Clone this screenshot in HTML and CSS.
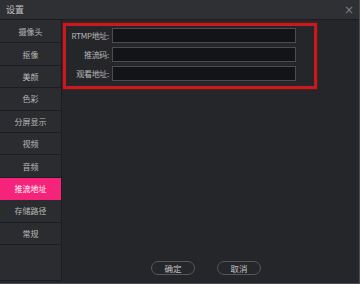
FILE: index.html
```html
<!DOCTYPE html>
<html lang="zh-CN">
<head>
    <meta charset="UTF-8">
    <title>设置</title>
    <link rel="stylesheet" href="styles.css">
</head>
<body>
    <div class="window">
        <div class="titlebar">
            <span class="title">设置</span>
            <span class="close">&times;</span>
        </div>

        <div class="main">
            <ul class="sidebar">
                <li>摄像头</li>
                <li>抠像</li>
                <li>美颜</li>
                <li>色彩</li>
                <li>分屏显示</li>
                <li>视频</li>
                <li>音频</li>
                <li class="active">推流地址</li>
                <li>存储路径</li>
                <li>常规</li>
            </ul>

            <div class="content">
                <div class="stream-box">
                    <div class="form-row">
                        <label for="rtmp">RTMP地址:</label>
                        <input type="text" id="rtmp">
                    </div>
                    <div class="form-row">
                        <label for="key">推流码:</label>
                        <input type="text" id="key">
                    </div>
                    <div class="form-row">
                        <label for="watch">观看地址:</label>
                        <input type="text" id="watch">
                    </div>
                </div>

                <div class="footer">
                    <button>确定</button>
                    <button>取消</button>
                </div>
            </div>
        </div>
    </div>
</body>
</html>
```

FILE: styles.css
```css
:root {
    --window-bg: #25262a;
    --sidebar-bg: #2b2c30;
    --line-color: #1c1d20;
    --text-color: #b8b8b8;
    --accent-color: #f6237a;
    --mark-color: #c8191d;
}

* {
    margin: 0;
    padding: 0;
    box-sizing: border-box;
}

body {
    font-family: "Noto Sans CJK SC", "Liberation Sans", sans-serif;
    background: var(--window-bg);
    color: var(--text-color);
}

.window {
    width: 360px;
    height: 284px;
    display: flex;
    flex-direction: column;
    background: var(--window-bg);
    border-right: 1px solid #4a4c51;
    border-bottom: 1px solid #4a4c51;
}

.titlebar {
    height: 20px;
    display: flex;
    align-items: center;
    justify-content: space-between;
    padding: 0 5px 0 6px;
    background: #2f3034;
    border-bottom: 1px solid var(--line-color);
}

.title {
    font-size: 9px;
    color: #c0c0c0;
}

.close {
    font-family: "DejaVu Sans", sans-serif;
    font-size: 12px;
    color: #7c7e83;
    line-height: 1;
}

.main {
    flex: 1;
    display: flex;
    padding-bottom: 2px;
}

.sidebar {
    list-style: none;
    width: 62px;
    padding-top: 1px;
    background: var(--sidebar-bg);
    border-right: 1px solid var(--line-color);
    border-bottom: 1px solid var(--line-color);
}

.sidebar li {
    height: 22.4px;
    display: flex;
    align-items: center;
    justify-content: center;
    font-size: 8px;
    color: var(--text-color);
    border-bottom: 1px solid var(--line-color);
}

.sidebar li.active {
    background: var(--accent-color);
    color: #fff;
    border-bottom-color: var(--accent-color);
}

.content {
    flex: 1;
    display: flex;
    flex-direction: column;
    padding: 3px 0 0 1px;
}

.stream-box {
    width: 254px;
    border: 3px solid var(--mark-color);
    box-shadow: 0 0 0 1px rgba(120, 20, 20, 0.5);
    padding: 2px 18px 5px 0;
    display: flex;
    flex-direction: column;
    gap: 4px;
}

.form-row {
    display: flex;
    align-items: center;
    gap: 3px;
}

.form-row label {
    width: 43px;
    text-align: right;
    font-size: 8px;
    color: var(--text-color);
    white-space: nowrap;
    letter-spacing: -0.3px;
}

.form-row input {
    width: 184px;
    height: 15px;
    background: #131417;
    border: 1px solid #4b4c51;
    outline: none;
}

.footer {
    margin-top: auto;
    display: flex;
    justify-content: center;
    gap: 22px;
    padding: 0 0 6px 0;
    margin-left: -10px;
}

.footer button {
    width: 44px;
    height: 14px;
    border-radius: 7px;
    border: 1px solid #55575c;
    background: #26272b;
    color: #c0c0c0;
    font-family: inherit;
    font-size: 8.5px;
    line-height: 1;
}
```
